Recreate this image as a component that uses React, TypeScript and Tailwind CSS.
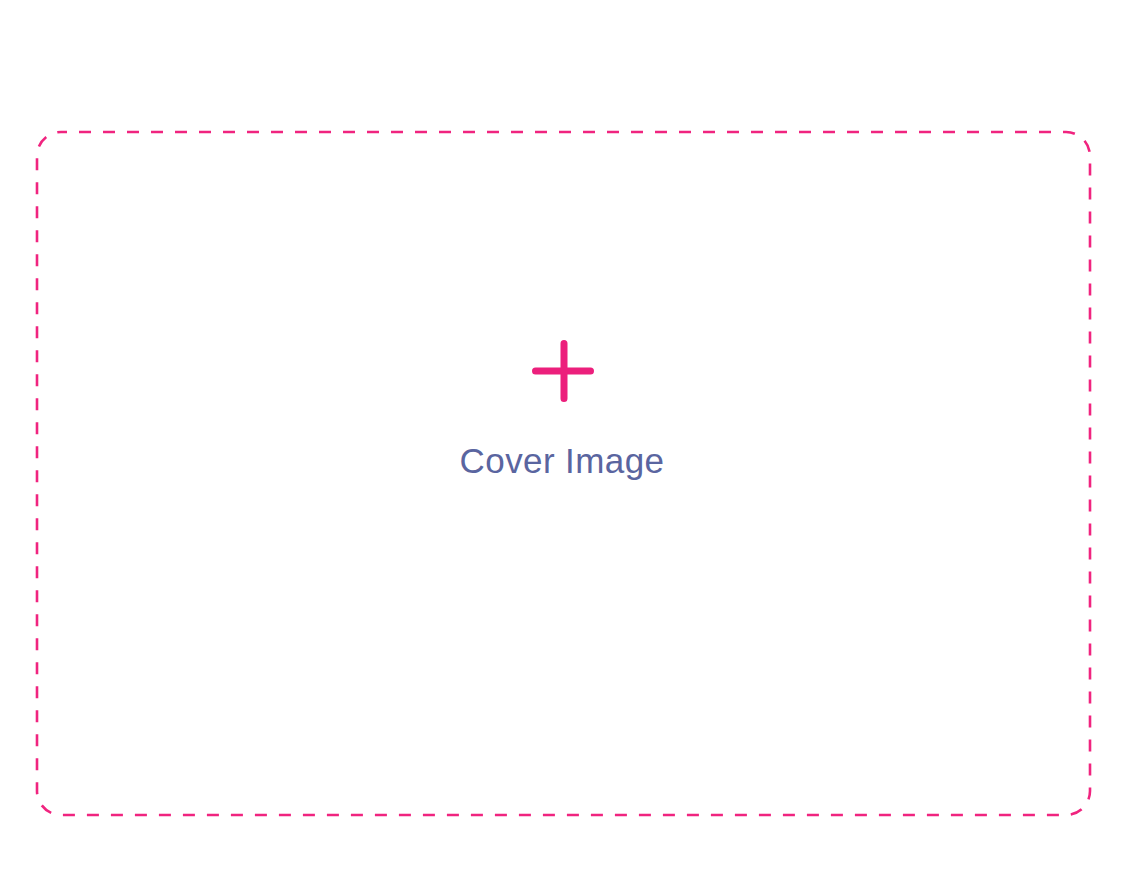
import React from "react";

export default function App() {
  return (
    <div className="w-[1124px] h-[872px] bg-white" style={{ fontFamily: '"Liberation Sans", Arial, sans-serif' }}>
      <div className="pt-[130px] pl-[35px]">
        <div className="relative w-[1057px] h-[687px] flex flex-col items-center pt-[210px]">
          <svg className="absolute inset-0" width="1057" height="687" viewBox="0 0 1057 687">
            <rect x="2" y="2" width="1053" height="683" rx="24" ry="24" fill="none" stroke="#f0247f" strokeWidth="2.6" strokeDasharray="12 12" strokeDashoffset="6" />
          </svg>
          <svg width="64" height="64" viewBox="0 0 64 64" className="ml-[1px]">
            <path d="M32 3.5 V58.5 M3.5 31 H58.5" stroke="#ec1f7c" strokeWidth="7" strokeLinecap="round" fill="none" />
          </svg>
          <div className="mt-[39px] text-[35px] leading-none tracking-[0.4px] text-[#5a65a0] -ml-[3px]">Cover Image</div>
        </div>
      </div>
    </div>
  );
}
